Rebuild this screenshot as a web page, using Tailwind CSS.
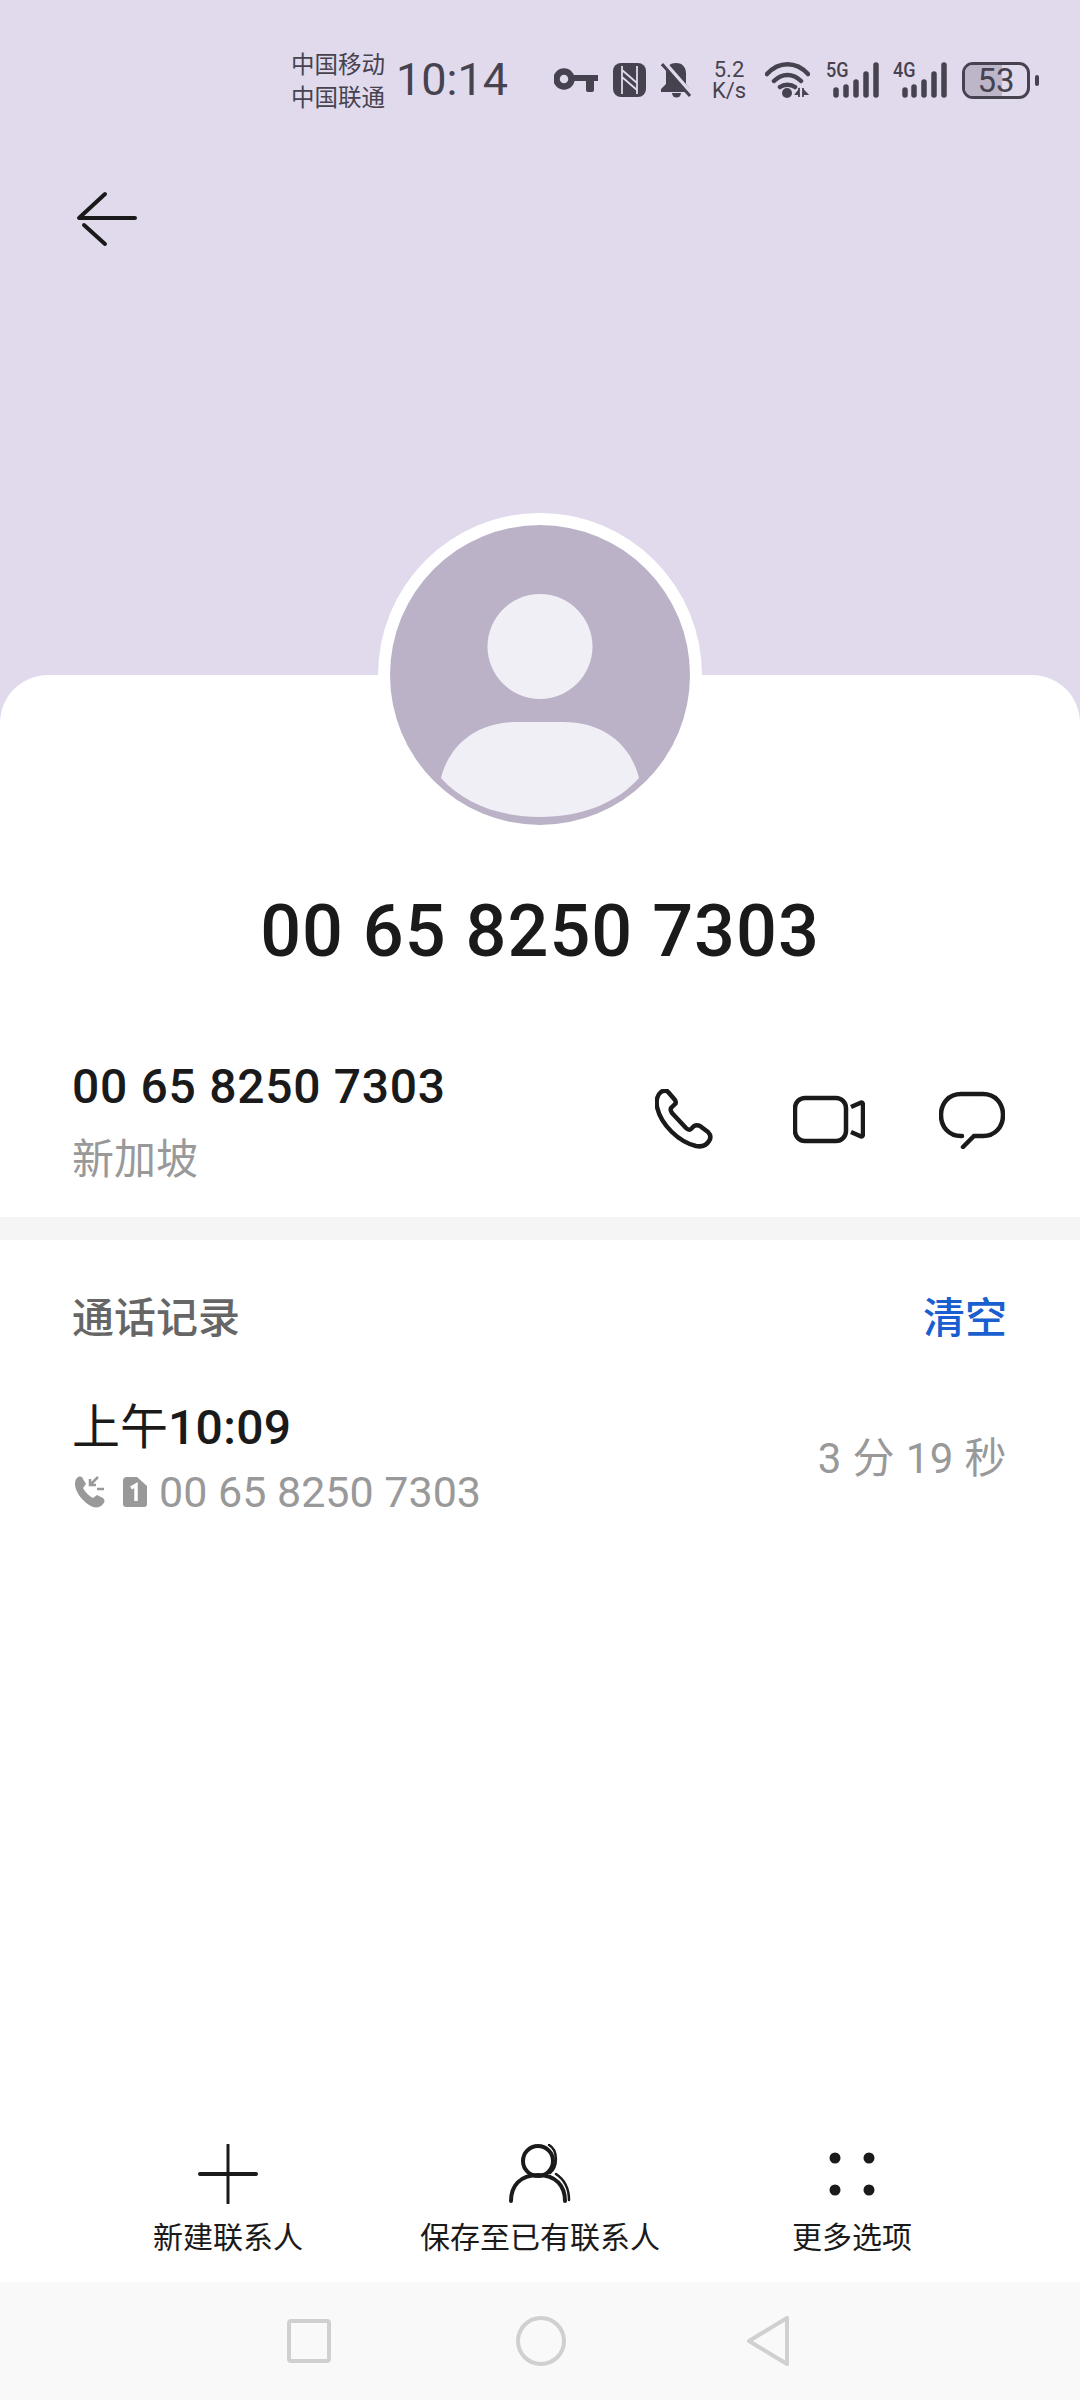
<!DOCTYPE html>
<html lang="zh">
<head>
  <meta charset="UTF-8">
  <meta name="viewport" content="width=device-width, initial-scale=1.0">
  <title>通话详情</title>
  <script src="https://cdn.jsdelivr.net/npm/@tailwindcss/browser@4"></script>
</head>
<body class="w-[1080px] h-[2400px] overflow-hidden bg-[#e0daec] font-['Roboto','Noto_Sans_CJK_SC',sans-serif]">
  <div class="h-[675px] flex flex-col">
    <!-- status bar -->
    <div class="h-[114px] pt-[46px] pl-[291px] flex items-center text-[#47424f]">
      <div class="w-[105px] text-[23.5px] leading-[33px] font-['Noto_Sans_CJK_SC',sans-serif] whitespace-nowrap">
        <div>中国移动</div>
        <div>中国联通</div>
      </div>
      <span class="w-[158px] text-[45px] leading-[52px]">10:14</span>
      <svg class="w-[44px] h-[24px] mr-[15px]" viewBox="0 0 44 24" fill="none" stroke="#47424f"><circle cx="10" cy="11" r="7.500" stroke-width="6.500"/><path d="M17 10h27" stroke-width="6"/><path d="M32 10h8v12a2 2 0 0 1-2 2h-4a2 2 0 0 1-2-2z" fill="#47424f" stroke="none"/></svg>
      <svg class="w-[33px] h-[34px] mr-[15px]" viewBox="0 0 33 34"><rect width="33" height="34" rx="8" fill="#47424f"/><path d="M9 3v28M24 3v28M9 7l15 13M9 14l15 13" fill="none" stroke="#e0daec" stroke-width="1.800"/></svg>
      <svg class="w-[31px] h-[36px] mr-[19px]" viewBox="0 0 31 36" fill="#47424f"><path d="M15 1C8 1 5 6 5 11v11l-5 5v3h29v-3l-4-5V11c0-5-3-10-10-10z"/><path d="M11 31h9a4.500 4.500 0 0 1-9 0z"/><path d="M3 0l28 32" stroke="#e0daec" stroke-width="4"/><path d="M1 2l28 32" stroke="#47424f" stroke-width="3"/></svg>
      <div class="w-[36px] mr-[18px] text-[22px] leading-[21px] text-center whitespace-nowrap flex flex-col items-center"><span>5.2</span><span>K/s</span></div>
      <svg class="w-[45px] h-[36px] mr-[16px]" viewBox="0 0 45 36" fill="none" stroke="#47424f" stroke-width="4.500" stroke-linecap="round"><path d="M2 12c12-13 29-13 41 0M9 19c8-8 19-8 27 0M15 25c4-3 11-3 15 0"/><circle cx="22" cy="31" r="5" fill="#47424f" stroke="none"/><path d="M34 28l-3 4h3zM34 26v9M38 26v9M38 28l4 4h-4z" fill="#47424f" stroke-width="1.800" stroke-linecap="butt"/></svg>
      <div class="relative w-[53px] h-[36px] mr-[14px]">
        <span class="absolute left-0 top-[-1px] text-[20px] leading-[18px] font-medium scale-x-90 origin-left">5G</span>
        <svg class="absolute inset-0 w-[53px] h-[36px]" viewBox="0 0 53 36" stroke="#47424f" stroke-width="5.500" stroke-linecap="round"><path d="M10 28v5M20 25v8M30 20v13M40 12v21M50 3v30"/></svg>
      </div>
      <div class="relative w-[54px] h-[36px] mr-[15px]">
        <span class="absolute left-0 top-[-1px] text-[20px] leading-[18px] font-medium scale-x-90 origin-left">4G</span>
        <svg class="absolute inset-0 w-[54px] h-[36px]" viewBox="0 0 54 36" stroke="#47424f" stroke-width="5.500" stroke-linecap="round"><path d="M12 28v5M21 25v8M31 20v13M41 12v21M51 3v30"/></svg>
      </div>
      <div class="relative w-[68px] h-[37px] rounded-[11px] border-[3px] border-[#47424f] flex items-center justify-center">
        <div class="absolute left-0 top-0 bottom-0 w-[60%] rounded-l-[8px] bg-[#bdb6c9]"></div>
        <span class="relative text-[33px] leading-[31px]">53</span>
      </div>
      <div class="ml-[5px] w-[4px] h-[11px] rounded-full bg-[#47424f]"></div>
    </div>
    <!-- back -->
    <div class="pl-[75px] pt-[76px]">
      <svg class="w-[65px] h-[58px]" viewBox="0 0 65 58" fill="none" stroke="#1a1a1a" stroke-width="4" stroke-linecap="round"><path d="M60 28H5M30 4L4 28M9 35l21 19"/></svg>
    </div>
  </div>

  <div class="relative h-[1607px] bg-white rounded-t-[48px]">
    <!-- avatar -->
    <div class="absolute left-[378px] top-[-162px] w-[324px] h-[324px] rounded-full bg-white p-[12px]">
      <svg class="w-[300px] h-[300px]" viewBox="0 0 300 300"><circle cx="150" cy="150" r="150" fill="#bbb2c8"/><circle cx="150" cy="121.500" r="52.500" fill="#f0eff5"/><path d="M51 253c8-32 34-56 76-56h46c42 0 68 24 76 56-22 25-58 39-99 39s-77-14-99-39z" fill="#f0eff5"/></svg>
    </div>

    <h1 class="pt-[215px] text-center text-[72px] leading-[84px] font-medium text-[#1a1a1a] tracking-[1px]">00 65 8250 7303</h1>

    <!-- number row -->
    <div class="mt-[83px] h-[160px] pl-[72px] pr-[75px] flex justify-between">
      <div>
        <div class="text-[48px] leading-[60px] font-medium text-[#1a1a1a] tracking-[0.7px]">00 65 8250 7303</div>
        <div class="mt-[19px] text-[42px] leading-[48px] text-[#999999]">新加坡</div>
      </div>
      <div class="flex pt-[32px] h-[92px]">
        <svg class="w-[60px] h-[60px] mr-[78px]" viewBox="0 0 60 60" fill="none" stroke="#1a1a1a" stroke-width="4.500" stroke-linejoin="round"><path d="M6 3c3-2 6-2 8 1l6 7c1 2 1 4-1 5l-3 3c-1 2 0 3 1 5l14 15c2 2 4 2 5 1l3-3c2-1 4-1 6 0l8 6c3 3 3 6 1 9-3 5-8 6-13 5C24 53 6 36 2 18 1 11 2 6 6 3z"/></svg>
        <svg class="w-[72px] h-[60px] mr-[74px]" viewBox="0 0 72 60" fill="none" stroke="#1a1a1a" stroke-width="4.500" stroke-linejoin="round"><rect x="2" y="9" width="51" height="43" rx="10"/><path d="M58 18l9-4c2-1 3 0 3 2v29c0 2-1 3-3 2l-9-4"/></svg>
        <svg class="w-[66px] h-[60px]" viewBox="0 0 66 60" fill="none" stroke="#1a1a1a" stroke-width="4.500" stroke-linecap="round"><path d="M23 47H22C10 47 2 38 2 26S10 5 22 5h22c12 0 20 9 20 21s-8 21-20 21H35L24 58"/></svg>
      </div>
    </div>

    <div class="h-[23px] bg-[#f5f5f5]"></div>

    <!-- call log -->
    <div class="pt-[52px] pl-[72px] pr-[73px]">
      <div class="flex justify-between items-center h-[52px] text-[42px] font-medium">
        <span class="text-[#666666]">通话记录</span>
        <span class="text-[#1a5fd0]">清空</span>
      </div>
      <div class="mt-[56px] flex justify-between items-center">
        <div>
          <div class="text-[48px] leading-[56px] text-[#1a1a1a]">上午<span class="font-medium tracking-[0.3px]">10:09</span></div>
          <div class="mt-[11px] flex items-center h-[50px]">
            <svg class="w-[33px] h-[32px] ml-[2px] mr-[16px]" viewBox="0 0 33 32" fill="#999999"><path d="M3 2c2-2 5-2 6 1l3 5-3 4c2 4 6 8 10 10l4-3 6 3c2 2 2 4 0 6-2 3-6 4-10 3C11 28 2 18 1 9 1 6 1 4 3 2z"/><path d="M24 1l-8 8M16 3v6h6M23 13h7" fill="none" stroke="#999999" stroke-width="2.500"/></svg>
            <svg class="w-[24px] h-[30px] mr-[12px]" viewBox="0 0 24 30"><path d="M4 0h10l10 9v18a3 3 0 0 1-3 3H3a3 3 0 0 1-3-3V4a4 4 0 0 1 4-4z" fill="#999999"/><path d="M8 11l5-3v16" fill="none" stroke="#fff" stroke-width="3.500"/></svg>
            <span class="text-[43px] leading-[50px] text-[#999999]">00 65 8250 7303</span>
          </div>
        </div>
        <span class="text-[42px] tracking-[0.4px] text-[#999999]">3 分 19 秒</span>
      </div>
    </div>

    <!-- bottom actions -->
    <div class="absolute left-0 right-0 top-[1469px] grid grid-cols-3 px-[72px] text-[#1a1a1a]">
      <div class="flex flex-col items-center">
        <svg class="w-[60px] h-[60px]" viewBox="0 0 60 60" stroke="#1a1a1a" stroke-linecap="round"><path d="M30 1v58" stroke-width="3"/><path d="M2 30h56" stroke-width="4"/></svg>
        <span class="mt-[14px] text-[30px] leading-[40px]">新建联系人</span>
      </div>
      <div class="flex flex-col items-center">
        <svg class="w-[62px] h-[60px]" viewBox="0 0 62 60" fill="none" stroke="#1a1a1a" stroke-width="4" stroke-linecap="round"><ellipse cx="29" cy="17" rx="15" ry="15"/><path d="M2 57c0-15 9-26 27-26s27 11 27 26"/><path d="M40 1c9 5 9 22 1 28M47 30c9 6 13 15 13 26" stroke-width="2.500"/></svg>
        <span class="mt-[14px] text-[30px] leading-[40px]">保存至已有联系人</span>
      </div>
      <div class="flex flex-col items-center">
        <svg class="w-[46px] h-[60px]" viewBox="0 0 46 60" fill="#1a1a1a"><circle cx="6" cy="14" r="5.500"/><circle cx="40" cy="14" r="5.500"/><circle cx="6" cy="46" r="5.500"/><circle cx="40" cy="46" r="5.500"/></svg>
        <span class="mt-[14px] text-[30px] leading-[40px]">更多选项</span>
      </div>
    </div>
  </div>

  <!-- nav bar -->
  <div class="h-[118px] bg-[#f9f9f9] flex items-center pl-[287px]">
    <svg class="w-[44px] h-[44px] mr-[185px]" viewBox="0 0 44 44" fill="none" stroke="#d0d0d0" stroke-width="4" stroke-linejoin="round"><rect x="2" y="2" width="40" height="40" rx="2"/></svg>
    <svg class="w-[50px] h-[50px] mr-[181px]" viewBox="0 0 50 50" fill="none" stroke="#d0d0d0" stroke-width="4"><circle cx="25" cy="25" r="23"/></svg>
    <svg class="w-[42px] h-[50px]" viewBox="0 0 42 50" fill="none" stroke="#d0d0d0" stroke-width="4" stroke-linejoin="round"><path d="M40 2v46L2 25z"/></svg>
  </div>
</body>
</html>
